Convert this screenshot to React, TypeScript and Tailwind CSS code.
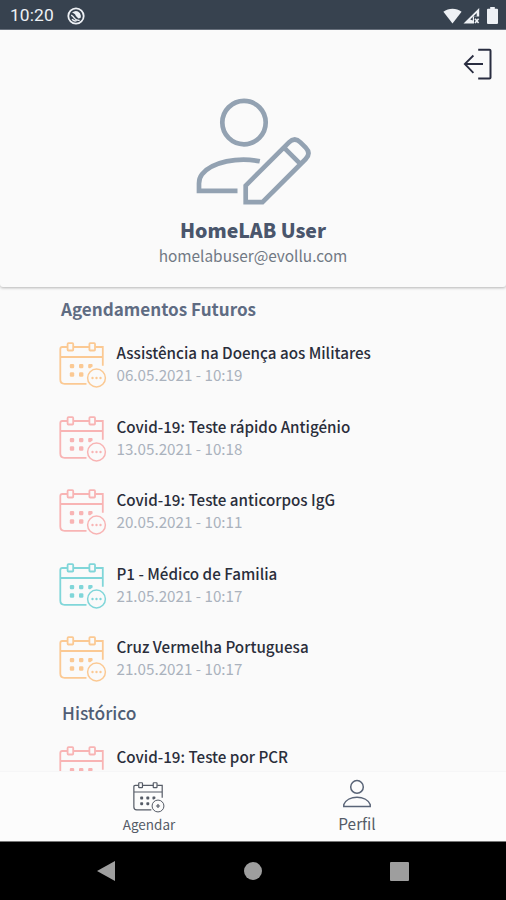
import React from 'react';

type Tone = 'orange' | 'red' | 'teal';

interface Appointment {
  title: string;
  date?: string;
  tone: Tone;
}

const toneClasses: Record<Tone, string> = {
  orange: 'text-[#fbc993]',
  red: 'text-[#f8b4b4]',
  teal: 'text-[#80d6d9]',
};

const upcoming: Appointment[] = [
  { title: 'Assistência na Doença aos Militares', date: '06.05.2021 - 10:19', tone: 'orange' },
  { title: 'Covid-19: Teste rápido Antigénio', date: '13.05.2021 - 10:18', tone: 'red' },
  { title: 'Covid-19: Teste anticorpos IgG', date: '20.05.2021 - 10:11', tone: 'red' },
  { title: 'P1 - Médico de Familia', date: '21.05.2021 - 10:17', tone: 'teal' },
  { title: 'Cruz Vermelha Portuguesa', date: '21.05.2021 - 10:17', tone: 'orange' },
];

const history: Appointment[] = [{ title: 'Covid-19: Teste por PCR', tone: 'red' }];

interface CalendarIconProps {
  className?: string;
  variant?: 'pending' | 'add';
}

const CalendarIcon: React.FC<CalendarIconProps> = ({ className, variant = 'pending' }) => (
  <svg viewBox="0 0 48 47" className={className} fill="none" stroke="currentColor" strokeWidth="1.8">
    <path d="M8.5 6H3.3Q1.3 6 1.3 8V38.6Q1.3 42.9 5.6 42.9H27.5M14.5 6H30.3M36.3 6H43.8V24.8M1.3 16H43.8" />
    <rect x="8.6" y="2.1" width="5.6" height="7.4" rx="0.8" />
    <rect x="30.4" y="2.1" width="5.6" height="7.4" rx="0.8" />
    <g fill="currentColor" stroke="none">
      <rect x="10.8" y="22.9" width="4.4" height="4.4" rx="1.2" />
      <rect x="20" y="22.9" width="4.4" height="4.4" rx="1.2" />
      <path d="M30.2 22.9h2.4a1 1 0 0 1 1 1v1.7l-2.4 1.6h-1a1 1 0 0 1-1-1v-2.3a1 1 0 0 1 1-1z" />
      <rect x="10.8" y="31.3" width="4.4" height="4.4" rx="1.2" />
      <rect x="20" y="31.3" width="4.4" height="4.4" rx="1.2" />
    </g>
    <circle cx="37.5" cy="37" r="8.9" strokeWidth="1.5" />
    {variant === 'pending' ? (
      <g fill="currentColor" stroke="none">
        <circle cx="33.5" cy="37" r="1.2" />
        <circle cx="37.5" cy="37" r="1.2" />
        <circle cx="41.5" cy="37" r="1.2" />
      </g>
    ) : (
      <path d="M34.4 37h6.2M37.5 33.9v6.2" />
    )}
  </svg>
);

const StatusBar: React.FC = () => (
  <div className="flex h-[30px] shrink-0 items-center justify-between border-b border-[#6b7480] bg-[#37424f] pl-[10px] pr-[8px] pt-[2px] text-[#eef1f5]">
    <div className="flex items-center gap-[13px]">
      <span className="pt-px font-['Roboto',sans-serif] text-[17.4px] leading-none tracking-[0.1px]">10:20</span>
      <svg viewBox="0 0 18 18" className="size-[18px]" fill="none" stroke="currentColor">
        <circle cx="9" cy="9" r="7.7" strokeWidth="1.8" />
        <path d="M5 5.6Q9.5 2.2 13 6.2Q14.3 8.4 13.5 11L11.4 11.4Q8.6 9.5 8 7.3Q6.6 6.3 5 5.6z" fill="currentColor" stroke="none" />
        <path d="M4.2 8.2Q6.2 9.2 7.5 11.3Q9.3 13.6 12.6 13.3M5 12.2Q7 14.2 9.4 14.2" strokeWidth="1.3" />
      </svg>
    </div>
    <div className="flex items-center">
      <svg viewBox="0 0 19 16" className="mr-[1px] h-4 w-[19px]" fill="currentColor">
        <path d="M.4 3.8C5.5-.3 13.5-.3 18.6 3.8L9.5 15.5z" />
      </svg>
      <svg viewBox="0 0 17 16" className="mr-[7px] h-4 w-[17px]">
        <path d="M.5 15.5 16.2 0v8.5H11v7z" fill="currentColor" />
        <path d="m7.2 11.5 6.5-6.5v3.5H9.8v4z" fill="#37424f" />
        <path d="m12 10.8 3.6 4.2m0-4.2L12 15" stroke="currentColor" strokeWidth="1.6" />
      </svg>
      <svg viewBox="0 0 11 17" className="h-[17px] w-[11px]" fill="currentColor">
        <path d="M3.2 0h4.6v1.8H10a1 1 0 0 1 1 1V16a1 1 0 0 1-1 1H1a1 1 0 0 1-1-1V2.8a1 1 0 0 1 1-1h2.2z" />
      </svg>
    </div>
  </div>
);

const ProfileHeader: React.FC = () => (
  <header className="z-10 flex h-[257px] shrink-0 flex-col items-center rounded-b-[3px] bg-[#fafafa] shadow-[0_1px_3px_rgba(0,0,0,0.28)]">
    <button className="mr-[13px] mt-[18px] self-end" aria-label="Sair">
      <svg viewBox="0 0 30 32" className="h-8 w-[30px]" fill="none" stroke="#292d40" strokeWidth="2">
        <path d="M15.2 1.8H26.5a1 1 0 0 1 1 1V29.5a1 1 0 0 1-1 1H15.2" />
        <path d="M20 16H1.6M10.4 7.5 1.8 16l8.6 8.8" strokeWidth="1.8" />
      </svg>
    </button>
    <svg viewBox="0 0 118 108" className="mt-[17px] h-[108px] w-[118px]" fill="none" stroke="#93a2b2" strokeWidth="4.7">
      <circle cx="50" cy="25.6" r="21.7" />
      <path d="M65.8 64.3C44 59.6 18 65 8 77.2Q5 81 5 86.5V93.9H43.5" />
      <path d="M51.7 105.2V88.6L95 45.3Q100.7 39.6 106.4 45.3L111.7 50.6Q117.4 56.3 111.7 62L68.5 105.2ZM90 50.6 106.3 66.9" />
    </svg>
    <h1 className="mt-[11px] text-[19.5px] font-black leading-[28px] text-[#4a566c]">HomeLAB User</h1>
    <p className="-mt-px text-[15.4px] leading-[24px] text-[#717984]">homelabuser@evollu.com</p>
  </header>
);

const AppointmentRow: React.FC<{ item: Appointment }> = ({ item }) => (
  <li className="flex h-[73.6px] gap-[9px]">
    <CalendarIcon className={`h-[47px] w-12 shrink-0 ${toneClasses[item.tone]}`} />
    <div className="pl-[0.5px]">
      <p className="text-[15.2px] font-medium leading-[22px] text-[#2a2e3b]">{item.title}</p>
      {item.date && <p className="text-[15.2px] leading-[23px] text-[#aab2bd]">{item.date}</p>}
    </div>
  </li>
);

const TabBar: React.FC = () => (
  <nav className="flex h-[70px] shrink-0 justify-between border-t border-[#f6f6f7] bg-[#fcfcfc] px-[109px] text-[#555b66]">
    <a className="flex w-20 flex-col items-center pt-[9px]">
      <CalendarIcon variant="add" className="h-[32px] w-[32px]" />
      <span className="mt-px text-[13.5px] leading-[20px]">Agendar</span>
    </a>
    <a className="flex w-20 flex-col items-center pt-[7px]">
      <svg viewBox="0 0 30 30" className="size-[30px]" fill="none" stroke="#596477" strokeWidth="1.5">
        <circle cx="15" cy="7.9" r="6.3" />
        <path d="M1.8 27.5V25.6C5.5 15.8 24.5 15.8 28.2 25.6V27.5Z" />
      </svg>
      <span className="mt-[4px] text-[15.4px] leading-[20px]">Perfil</span>
    </a>
  </nav>
);

const SystemNav: React.FC = () => (
  <div className="flex h-[59px] shrink-0 items-center justify-between border-t border-[#777777] bg-black px-[97px] text-[#9e9e9e]">
    <svg viewBox="0 0 18 20" className="h-5 w-[18px]" fill="currentColor">
      <path d="M0 10 18 0v20z" />
    </svg>
    <div className="size-[18px] rounded-full bg-[#9e9e9e]" />
    <div className="size-[19px] rounded-[1px] bg-[#9e9e9e]" />
  </div>
);

const App: React.FC = () => {
  return (
    <div className="flex h-[900px] w-[506px] flex-col overflow-hidden bg-[#fafafa] font-['Noto_Sans_CJK_SC',sans-serif]">
      <StatusBar />
      <ProfileHeader />
      <main className="min-h-0 flex-1 overflow-hidden pl-[59px]">
        <h2 className="ml-[2px] mt-[8px] text-[17.1px] font-bold leading-[28px] text-[#5f6c83]">Agendamentos Futuros</h2>
        <ul className="mt-[18px]">
          {upcoming.map((item) => (
            <AppointmentRow key={item.title} item={item} />
          ))}
        </ul>
        <h2 className="-mt-[10px] ml-[3px] text-[17.4px] font-medium leading-[28px] text-[#4f5d75]">Histórico</h2>
        <ul className="mt-[18px]">
          {history.map((item) => (
            <AppointmentRow key={item.title} item={item} />
          ))}
        </ul>
      </main>
      <TabBar />
      <SystemNav />
    </div>
  );
};

export default App;
